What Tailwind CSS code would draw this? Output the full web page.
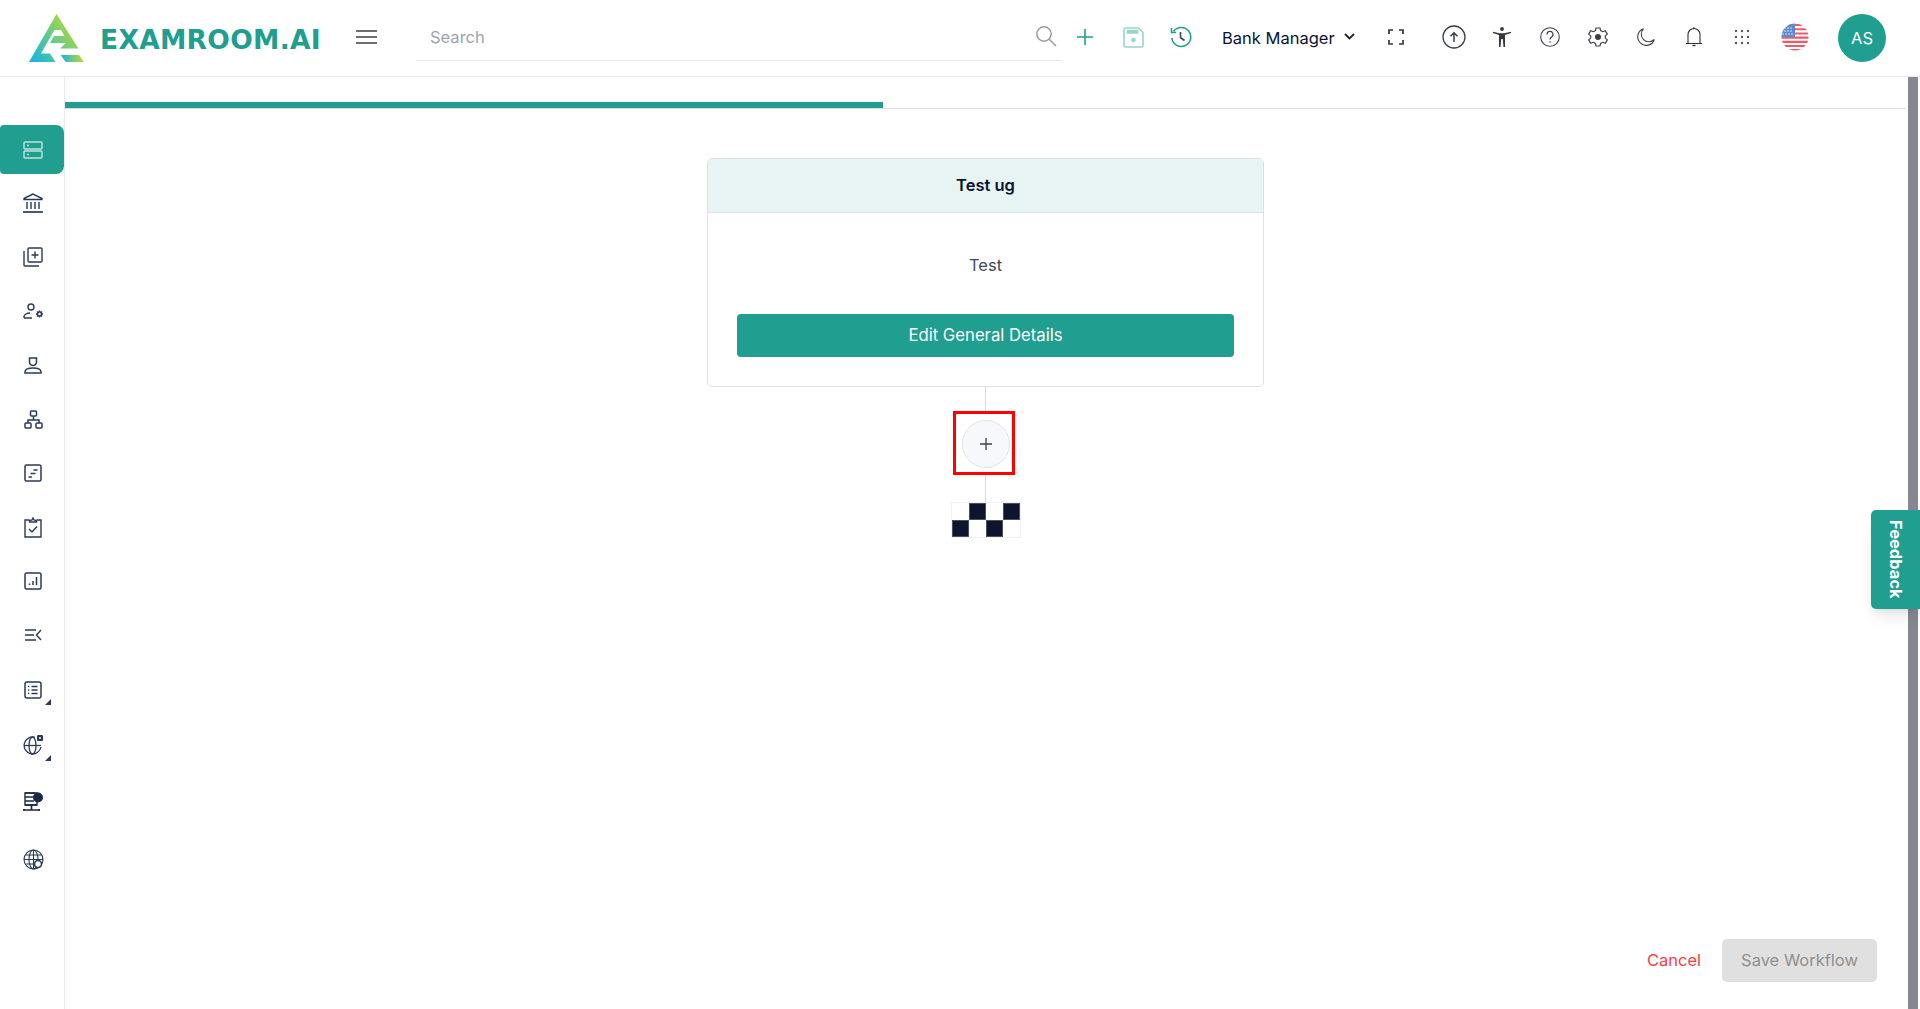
<!DOCTYPE html>
<html lang="en">
<head>
<meta charset="utf-8">
<title>Examroom.ai</title>
<script src="https://cdn.jsdelivr.net/npm/@tailwindcss/browser@4"></script>
</head>
<body class="h-[1009px] w-[1920px] overflow-hidden bg-white font-['Inter','Liberation_Sans',sans-serif] text-[#0b1430]">
<header class="flex h-[77px] items-center border-b border-[#e8eaef] bg-white">
  <div class="flex w-[352px] shrink-0 items-center pl-[29px]">
    <svg width="56" height="48" viewBox="0 0 56 48" class="shrink-0">
      <defs>
        <linearGradient id="lg1" x1="0" y1="1" x2="1" y2="0.2"><stop offset="0" stop-color="#12b3e6"/><stop offset=".45" stop-color="#55c89a"/><stop offset="1" stop-color="#c4dc26"/></linearGradient>
        <linearGradient id="lg2" x1="0" y1="0" x2="1" y2="0"><stop offset="0" stop-color="#12b3e6"/><stop offset="1" stop-color="#c4dc26"/></linearGradient>
      </defs>
      <path d="M27.500 0 L0 48 H26.500 L21 39.500 H12 L25.500 16 H32 L35.500 22 H25 L21 29 H37 L31 34.500 H49.500 Z" fill="url(#lg1)"/>
      <path d="M31.700 41 H50 L55 48 H36.700 Z" fill="url(#lg2)"/>
    </svg>
    <span class="ml-[15px] translate-y-[2px] font-['DejaVu_Sans',sans-serif] text-[26.500px] font-bold leading-none tracking-[0.3px] text-[#209e8f]">EXAMROOM.AI</span>
  </div>
  <button class="mb-[2px] flex w-[30px] shrink-0 justify-center" aria-label="Menu">
    <svg width="22" height="16" viewBox="0 0 22 16" fill="none" stroke="#3d3f45" stroke-width="1.600"><path d="M0 2h21M0 8h21M0 14h21"/></svg>
  </button>
  <div class="ml-[34px] flex h-[47px] w-[646px] shrink-0 translate-y-[-1px] items-center justify-between border-b border-[#e8eaef] pr-[5px] pl-[14px]">
    <span class="pt-[2px] text-[16.500px] text-[#9ca3af]">Search</span>
    <svg class="mb-[2px]" width="22" height="22" viewBox="0 0 22 22" fill="none" stroke="#9a9aa2" stroke-width="1.500"><circle cx="9" cy="9" r="7.200"/><path d="M14.200 14.200 21 21"/></svg>
  </div>
  <div class="mb-[2px] flex w-[46px] shrink-0 justify-center">
    <svg width="16" height="16" viewBox="0 0 16 16" fill="none" stroke="#209e8f" stroke-width="1.600"><path d="M8 0v16M0 8h16"/></svg>
  </div>
  <div class="mb-[2px] ml-[1px] flex w-[48px] shrink-0 justify-center">
    <svg width="21" height="21" viewBox="0 0 21 21" fill="none" stroke="#97d5cd" stroke-width="1.600"><path d="M2.500 1h13L20 5.500v13a1.500 1.500 0 0 1-1.500 1.500h-16A1.500 1.500 0 0 1 1 18.500v-16A1.500 1.500 0 0 1 2.500 1Z"/><path d="M4.500 3.500h10v2.500h-10Z" fill="#97d5cd"/><circle cx="10.500" cy="13" r="2.300" fill="#97d5cd" stroke="none"/></svg>
  </div>
  <div class="mb-[2px] flex w-[48px] shrink-0 justify-center">
    <svg width="22" height="22" viewBox="0 0 22 22" fill="none" stroke="#209e8f" stroke-width="1.600"><path d="M3.500 5.500A9.500 9.500 0 1 1 1.800 12"/><path d="M1.500 2v4.500H6"/><path d="M10.500 6v5.500l4 3" stroke="#3a4a55"/></svg>
  </div>
  <div class="ml-[17px] flex w-[140px] shrink-0 items-center">
    <span class="text-[16.500px] leading-none">Bank Manager</span>
    <svg class="mb-[3px] ml-[9px]" width="11" height="7" viewBox="0 0 11 7" fill="none" stroke="#1d2433" stroke-width="1.800"><path d="M1 1l4.500 4.500L10 1"/></svg>
  </div>
  <div class="mb-[2px] ml-[10px] flex w-[48px] shrink-0 justify-center">
    <svg width="16" height="16" viewBox="0 0 16 16" fill="none" stroke="#30343c" stroke-width="1.700"><path d="M1 5V1h4M11 1h4v4M15 11v4h-4M5 15H1v-4"/></svg>
  </div>
  <div class="mb-[2px] ml-[10px] flex w-[48px] shrink-0 justify-center">
    <svg width="24" height="24" viewBox="0 0 24 24" fill="none" stroke="#3d4048" stroke-width="1.300"><circle cx="12" cy="12" r="11"/><path d="M12 17V8M8.500 11.200 12 7.700l3.500 3.500" stroke-width="1.500"/></svg>
  </div>
  <div class="mb-[2px] flex w-[48px] shrink-0 justify-center">
    <svg width="18" height="20" viewBox="0 0 18 20" fill="#33363d"><circle cx="9" cy="2" r="1.900"/><path d="M0 4.700 6.500 6.200h5L18 4.700v1.200L12 8v12h-1.500l-.7-8H8.200l-.7 8H6V8L0 5.900Z"/></svg>
  </div>
  <div class="mb-[2px] flex w-[48px] shrink-0 justify-center">
    <svg width="20" height="20" viewBox="0 0 20 20" fill="none" stroke="#3d4048" stroke-width="1.100"><circle cx="10" cy="10" r="9.300"/><path d="M7 7.500A3 3 0 1 1 11.500 10c-1 .7-1.500 1.200-1.500 2.500" stroke-width="1.200"/><circle cx="10" cy="15" r=".8" fill="#3d4048" stroke="none"/></svg>
  </div>
  <div class="mb-[2px] flex w-[48px] shrink-0 justify-center">
    <svg width="20" height="20" viewBox="0 0 20 20" fill="none" stroke="#3d4048" stroke-width="1.200"><path d="M8 1h4l.6 2.600 2.200 1.100 2.500-.9 2 3.300-2 1.800v2.200l2 1.800-2 3.300-2.500-.9-2.200 1.100L12 19H8l-.6-2.600-2.200-1.100-2.500.9-2-3.300 2-1.800V8.900l-2-1.800 2-3.300 2.500.9 2.200-1.100Z"/><circle cx="10" cy="10" r="3" fill="#3d4048" stroke="none"/></svg>
  </div>
  <div class="mb-[2px] flex w-[48px] shrink-0 justify-center">
    <svg width="18" height="18" viewBox="0 0 18 18" fill="none" stroke="#3d4048" stroke-width="1.100"><path d="M6.500.8A8.500 8.500 0 1 0 17.300 11.500 7.500 7.500 0 0 1 6.500.8Z"/></svg>
  </div>
  <div class="mb-[2px] flex w-[48px] shrink-0 justify-center">
    <svg width="16" height="20" viewBox="0 0 16 20" fill="none" stroke="#2f3238" stroke-width="1.100"><path d="M0 16.500h16M2 16.500V7.500a6 6 0 0 1 12 0v9"/><circle cx="8" cy="1.200" r=".9" fill="#2f3238" stroke="none"/><path d="M6.500 18.500h3" stroke-width="1.400"/></svg>
  </div>
  <div class="mb-[2px] flex w-[48px] shrink-0 justify-center">
    <svg width="16" height="16" viewBox="0 0 16 16" fill="#55585f"><circle cx="2" cy="2" r="1.200"/><circle cx="8" cy="2" r="1.200"/><circle cx="14" cy="2" r="1.200"/><circle cx="2" cy="8" r="1.200"/><circle cx="8" cy="8" r="1.200"/><circle cx="14" cy="8" r="1.200"/><circle cx="2" cy="14" r="1.200"/><circle cx="8" cy="14" r="1.200"/><circle cx="14" cy="14" r="1.200"/></svg>
  </div>
  <div class="mb-[2px] ml-[2px] flex w-[54px] shrink-0 justify-center">
    <svg width="28" height="28" viewBox="0 0 28 28">
      <defs><clipPath id="fc"><circle cx="14" cy="14" r="13.500"/></clipPath></defs>
      <g clip-path="url(#fc)">
        <rect width="28" height="28" fill="#fff"/>
        <path d="M0 1h28v2.100H0ZM0 5.200h28v2.100H0ZM0 9.400h28v2.100H0ZM0 13.600h28v2.100H0ZM0 17.800h28v2.100H0ZM0 22h28v2.100H0ZM0 26h28v2H0Z" fill="#ee5b66"/>
        <rect width="14" height="14" fill="#5c8bd0"/>
        <g fill="#fff"><circle cx="4" cy="5" r=".7"/><circle cx="7" cy="5" r=".7"/><circle cx="10" cy="5" r=".7"/><circle cx="4" cy="8" r=".7"/><circle cx="7" cy="8" r=".7"/><circle cx="10" cy="8" r=".7"/><circle cx="2" cy="11" r=".7"/><circle cx="5" cy="11" r=".7"/><circle cx="8" cy="11" r=".7"/><circle cx="11" cy="11" r=".7"/></g>
      </g>
    </svg>
  </div>
  <div class="ml-[16px] flex h-12 w-12 shrink-0 items-center justify-center rounded-full bg-[#209e8f] text-[16.500px] text-white">AS</div>
</header>

<div class="flex h-[932px]">
  <aside class="flex w-[65px] shrink-0 flex-col border-r border-[#e8eaef] pt-[48px] text-[#2b3a55]">
    <a class="flex h-[49px] items-center justify-center rounded-r-lg rounded-l-sm bg-[#209e8f] pl-[2px]">
      <svg width="20" height="18" viewBox="0 0 20 18" fill="none" stroke="#bfe4df" stroke-width="1.400"><rect x="1" y="1" width="18" height="7" rx="1"/><rect x="1" y="10" width="18" height="7" rx="1"/><path d="M4 4.500h2M4 13.500h2"/></svg>
    </a>
    <a class="flex h-[54px] items-center justify-center pt-[3px] pl-[2px]">
      <svg width="20" height="20" viewBox="0 0 20 20" fill="none" stroke="#2b3a55" stroke-width="1.400"><path d="M10 1 1 5.500v1h18v-1ZM4 9v7M8 9v7M12 9v7M16 9v7"/><path d="M0 19h20" stroke-width="1.700"/></svg>
    </a>
    <a class="flex h-[55px] items-center justify-center pt-[2px] pl-[2px]">
      <svg width="20" height="20" viewBox="0 0 20 20" fill="none" stroke="#2b3a55" stroke-width="1.400"><rect x="5" y="1" width="14" height="14" rx="1"/><path d="M1 4v14a1 1 0 0 0 1 1h14M12 4.500v7M8.500 8h7"/></svg>
    </a>
    <a class="flex h-[55px] items-center justify-center pl-[2px]">
      <svg width="21" height="16" viewBox="0 0 21 16" fill="none" stroke="#2b3a55" stroke-width="1.400"><circle cx="8" cy="4" r="3"/><path d="M1 15v-1.500c0-2 3-3.500 6-3.500M1 15h8"/><circle cx="16.500" cy="11" r="2"/><path d="M16.500 7.500v1.500M16.500 13v1.500M13 11h1.500M18.500 11H20M14 8.500l1 1M18 12.500l1 1M19 8.500l-1 1M15 12.500l-1 1"/></svg>
    </a>
    <a class="flex h-[54px] items-center justify-center pl-[2px]">
      <svg width="18" height="17" viewBox="0 0 18 17" fill="none" stroke="#2b3a55" stroke-width="1.500"><path d="M5.500 1h7v4a3.500 3.500 0 0 1-7 0Z"/><path d="M1 16v-1c0-2.500 3-4 8-4s8 1.500 8 4v1Z"/></svg>
    </a>
    <a class="flex h-[54px] items-center justify-center pl-[2px]">
      <svg width="19" height="19" viewBox="0 0 19 19" fill="none" stroke="#2b3a55" stroke-width="1.500"><rect x="6.500" y="1" width="6" height="5" rx="1"/><rect x="1" y="13" width="6" height="5" rx="1"/><rect x="12" y="13" width="6" height="5" rx="1"/><path d="M9.500 6v4M4 13v-3h11v3"/></svg>
    </a>
    <a class="flex h-[54px] items-center justify-center pl-[2px]">
      <svg width="18" height="18" viewBox="0 0 18 18" fill="none" stroke="#2b3a55" stroke-width="1.500"><rect x="1" y="1" width="16" height="16" rx="1.500"/><path d="M9.500 6h4M6.500 9.500h5M4.500 13H8"/></svg>
    </a>
    <a class="flex h-[54px] items-center justify-center pl-[2px]">
      <svg width="18" height="21" viewBox="0 0 18 21" fill="none" stroke="#2b3a55" stroke-width="1.400"><path d="M5.500 3H1v17h16V3h-4.500"/><path d="M5.500 5V3.500L8 3l1-2 1 2 2.500.5V5Z"/><path d="M5 12l3 3 5-5.500"/></svg>
    </a>
    <a class="flex h-[54px] items-center justify-center pl-[2px]">
      <svg width="18" height="18" viewBox="0 0 18 18" fill="none" stroke="#2b3a55" stroke-width="1.500"><rect x="1" y="1" width="16" height="16" rx="1.500"/><path d="M5.500 13v-1.500M9 13V9M12.500 13V5"/></svg>
    </a>
    <a class="flex h-[54px] items-center justify-center pl-[2px]">
      <svg width="17" height="12" viewBox="0 0 17 12" fill="none" stroke="#2b3a55" stroke-width="1.400"><path d="M0 1h11M0 6h9M0 11h11M16 1l-4.500 5 4.500 5"/></svg>
    </a>
    <a class="relative flex h-[55px] items-center justify-center pl-[2px]">
      <svg width="18" height="18" viewBox="0 0 18 18" fill="none" stroke="#2b3a55" stroke-width="1.500"><rect x="1" y="1" width="16" height="16" rx="2"/><path d="M7.500 5.500h6M7.500 9h6M7.500 12.500h6M4 5.500h1.200M4 9h1.200M4 12.500h1.200"/></svg>
      <span class="absolute top-[37px] left-[45px] h-0 w-0 border-b-[6px] border-l-[6px] border-b-[#2b3a55] border-l-transparent"></span>
    </a>
    <a class="relative flex h-[56px] items-center justify-center pl-[2px]">
      <svg width="20" height="20" viewBox="0 0 20 20" fill="none" stroke="#2b3a55" stroke-width="1.300"><path d="M12 2.300A8.500 8.500 0 1 0 18 12"/><ellipse cx="9.500" cy="10.500" rx="3.500" ry="8.500"/><path d="M1 10.500h17"/><rect x="14" y="0" width="6" height="6" rx="1" fill="#2b3a55" stroke="none"/><circle cx="17" cy="3" r="1" fill="#fff" stroke="none"/></svg>
      <span class="absolute top-[38px] left-[45px] h-0 w-0 border-b-[6px] border-l-[6px] border-b-[#2b3a55] border-l-transparent"></span>
    </a>
    <a class="flex h-[57px] items-center justify-center pl-[2px]">
      <svg width="21" height="20" viewBox="0 0 21 20" fill="none" stroke="#1a2947" stroke-width="1.400"><path d="M2 1h12v12H2Z" fill="#fff"/><path d="M2 1h10M2 5h9M2 9h9M2 13h12"/><circle cx="15" cy="5.500" r="5" fill="#1a2947" stroke="none"/><path d="M8.500 13v5M0 18h17" stroke-width="1.700"/><circle cx="1" cy="18" r="1" fill="#1a2947" stroke="none"/><circle cx="16" cy="18" r="1" fill="#1a2947" stroke="none"/></svg>
    </a>
    <a class="flex h-[58px] items-center justify-center pl-[2px]">
      <svg width="21" height="21" viewBox="0 0 21 21" fill="none" stroke="#2b3a55" stroke-width="1.100"><circle cx="10.500" cy="10.500" r="9.500"/><ellipse cx="10.500" cy="10.500" rx="4.500" ry="9.500"/><path d="M1 10.500h19M2.500 6h16M2.500 15h16M10.500 1v19"/><circle cx="15" cy="15" r="3.500" fill="#fff" stroke-width="1.600"/></svg>
    </a>
  </aside>

  <main class="flex min-w-0 flex-1 flex-col">
    <div class="flex h-[32px] shrink-0 items-end pt-[25px]">
      <div class="h-[7px] w-[818px] border-b border-[#dcdde6] bg-[#209e8f]"></div>
      <div class="h-px flex-1 bg-[#dcdde6]"></div>
    </div>
    <div class="flex flex-1 flex-col items-center pt-[49px]">
      <section class="w-[557px] overflow-hidden rounded-[5px] border border-[#dbe1e8] bg-white">
        <h2 class="flex h-[54px] items-center justify-center border-b border-[#dbe1e8] bg-[#e8f4f3] text-[16.500px] font-semibold">Test ug</h2>
        <p class="flex h-[72px] items-end justify-center pb-[7px] text-[16.500px] text-[#434a59]">Test</p>
        <div class="px-[29px] pt-[29px] pb-[29px]">
          <button class="h-[43px] w-full rounded-[4px] bg-[#209e8f] text-[16.700px] font-normal text-white">Edit General Details</button>
        </div>
      </section>
      <div class="h-[24px] w-px bg-[#d5d8df]"></div>
      <div class="mr-[3px] flex h-[64px] w-[62px] items-center justify-center border-[3px] border-[#ff0000] pt-[2px] pl-[3px]">
        <div class="flex h-12 w-12 items-center justify-center rounded-full border border-[#e0e4ea] bg-[#f6f8fb]">
          <svg width="12" height="12" viewBox="0 0 12 12" fill="none" stroke="#3d4048" stroke-width="1.300"><path d="M6 0v12M0 6h12"/></svg>
        </div>
      </div>
      <div class="h-[27px] w-px bg-[#d5d8df]"></div>
      <div class="grid grid-cols-4 border-[1px] border-[#eff1f5]">
        <div class="h-[17px] w-[17px] bg-white"></div>
        <div class="h-[17px] w-[17px] border border-[#4a5060] bg-[#0c142e]"></div>
        <div class="h-[17px] w-[17px] bg-white"></div>
        <div class="h-[17px] w-[17px] border border-[#4a5060] bg-[#0c142e]"></div>
        <div class="h-[17px] w-[17px] border border-[#4a5060] bg-[#0c142e]"></div>
        <div class="h-[17px] w-[17px] bg-white"></div>
        <div class="h-[17px] w-[17px] border border-[#4a5060] bg-[#0c142e]"></div>
        <div class="h-[17px] w-[17px] bg-white"></div>
      </div>
      <div class="mt-auto flex w-full items-center justify-end pr-[29px] pb-[27px]">
        <button class="text-[16.500px] text-[#f43f3f]">Cancel</button>
        <button class="ml-[21px] h-[43px] w-[155px] rounded-[5px] bg-[#e0e0e0] text-[16.500px] text-[#8f8f8f]">Save Workflow</button>
      </div>
    </div>
  </main>
  <div class="ml-[2px] w-[10px] shrink-0 bg-[#868791]"></div>
  <div class="w-[2px] shrink-0"></div>
</div>

<button class="absolute top-[510px] right-0 flex h-[99px] w-[49px] items-center justify-center rounded-l-[5px] bg-[#209e8f] shadow-lg">
  <span class="text-[16.500px] font-bold text-white [writing-mode:vertical-rl]">Feedback</span>
</button>
</body>
</html>
